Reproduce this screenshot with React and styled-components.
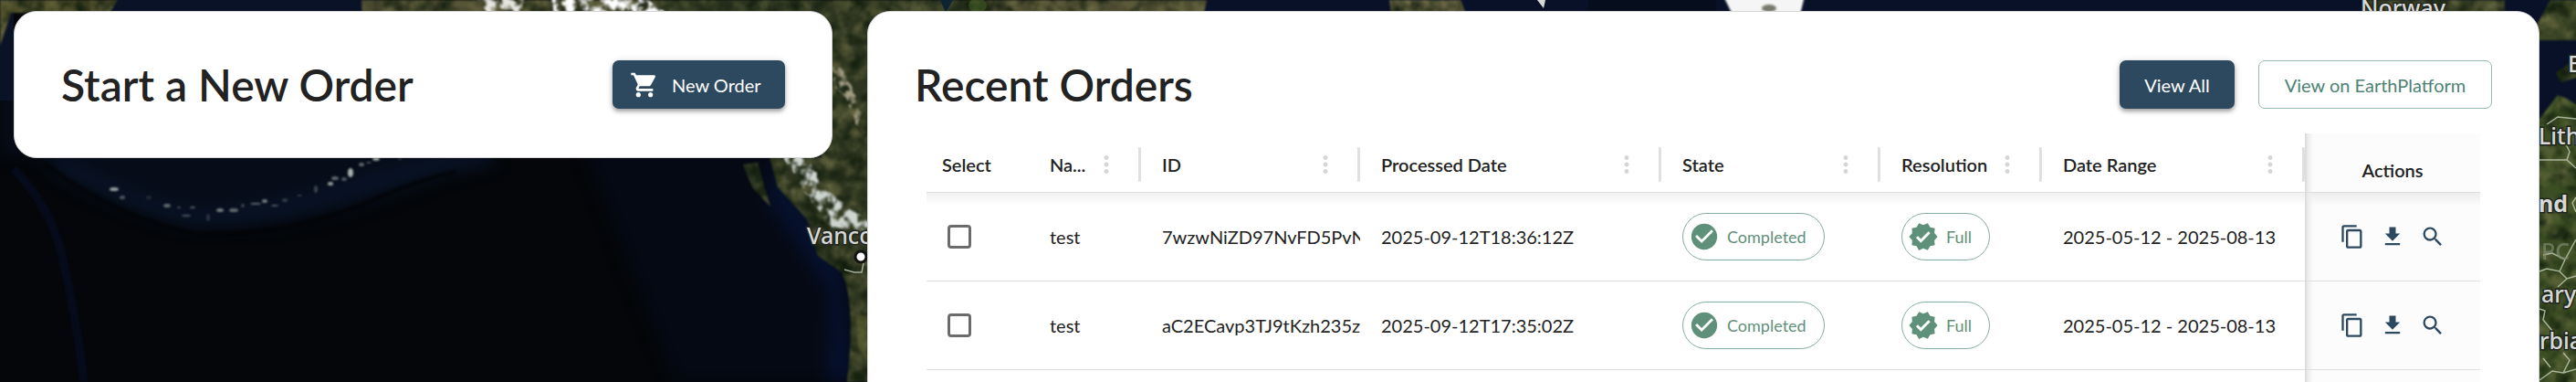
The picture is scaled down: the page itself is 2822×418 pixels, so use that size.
import React, { useState } from 'react';
import styled, { createGlobalStyle } from 'styled-components';
import {
  MdShoppingCart,
  MdMoreVert,
  MdCheckCircle,
  MdVerified,
  MdContentCopy,
  MdFileDownload,
  MdSearch,
} from 'react-icons/md';

const columns = [
  { label: 'Select', width: 112, plain: true },
  { label: 'Na...', width: 123 },
  { label: 'ID', width: 240 },
  { label: 'Processed Date', width: 330 },
  { label: 'State', width: 240 },
  { label: 'Resolution', width: 177 },
  { label: 'Date Range', width: 288 },
];

const orders = [
  {
    name: 'test',
    id: '7wzwNiZD97NvFD5PvN',
    processed: '2025-09-12T18:36:12Z',
    state: 'Completed',
    resolution: 'Full',
    range: '2025-05-12 - 2025-08-13',
  },
  {
    name: 'test',
    id: 'aC2ECavp3TJ9tKzh235z',
    processed: '2025-09-12T17:35:02Z',
    state: 'Completed',
    resolution: 'Full',
    range: '2025-05-12 - 2025-08-13',
  },
];

// small islands along the arc: x, y, rx, ry, opacity
const islands = [
  [125, 207, 5, 2, 0.8], [134, 216, 3, 2, 0.4], [163, 216, 3, 2, 0.15], [183, 225, 4, 2, 0.5],
  [196, 227, 2, 1, 0.4], [211, 227, 3, 1, 0.5], [204, 236, 5, 1, 0.4], [228, 238, 2, 4, 0.2],
  [241, 230, 4, 2, 0.6], [256, 230, 5, 2, 0.5], [266, 225, 2, 2, 0.3], [280, 223, 6, 1, 0.5],
  [290, 220, 3, 2, 0.6], [301, 225, 4, 1, 0.4], [312, 219, 3, 2, 0.25], [328, 214, 3, 1, 0.25],
  [346, 207, 2, 4, 0.3], [362, 201, 3, 2, 0.8], [367, 195, 4, 2, 0.5], [377, 196, 3, 2, 0.4],
  [384, 189, 3, 5, 0.9], [396, 180, 3, 2, 0.5], [404, 178, 3, 1, 0.4], [412, 174, 4, 2, 0.8],
  [438, 174, 2, 1, 0.3],
];

const MapBackground = () => (
  <MapSvg viewBox="0 0 2822 418" preserveAspectRatio="xMinYMin slice" aria-hidden="true">
    <defs>
      <filter id="soft" x="-20%" y="-20%" width="140%" height="140%" colorInterpolationFilters="sRGB">
        <feGaussianBlur stdDeviation="9" />
      </filter>
      <filter id="edge" x="-20%" y="-20%" width="140%" height="140%" colorInterpolationFilters="sRGB">
        <feGaussianBlur stdDeviation="1" />
      </filter>
      <filter id="terrain" x="0" y="0" width="100%" height="100%" colorInterpolationFilters="sRGB">
        <feTurbulence type="fractalNoise" baseFrequency="0.06" numOctaves="4" seed="7" result="noise" />
        <feColorMatrix in="noise" values="0 0 0 0 0.45  0 0 0 0 0.45  0 0 0 0 0.28  1.6 0 0 0 -0.6" result="light" />
        <feColorMatrix in="noise" values="0 0 0 0 0.05  0 0 0 0 0.1  0 0 0 0 0.04  0 2 0 0 -0.8" result="dark" />
        <feComposite in="light" in2="SourceAlpha" operator="in" result="lightCut" />
        <feComposite in="dark" in2="SourceAlpha" operator="in" result="darkCut" />
        <feMerge result="land">
          <feMergeNode in="SourceGraphic" />
          <feMergeNode in="lightCut" />
          <feMergeNode in="darkCut" />
        </feMerge>
        <feGaussianBlur in="land" stdDeviation="1" />
      </filter>
      <filter id="snow" x="-20%" y="-20%" width="140%" height="140%" colorInterpolationFilters="sRGB">
        <feTurbulence type="fractalNoise" baseFrequency="0.1" numOctaves="3" seed="3" result="noise" />
        <feDisplacementMap in="SourceGraphic" in2="noise" scale="18" result="rough" />
        <feColorMatrix in="noise" values="0 0 0 0 1  0 0 0 0 1  0 0 0 0 1  5 0 0 0 -2" result="holes" />
        <feComposite in="rough" in2="holes" operator="in" result="patches" />
        <feGaussianBlur in="patches" stdDeviation="1" />
      </filter>
    </defs>

    <rect width="2822" height="418" fill="#040609" />

    {/* open water */}
    <g filter="url(#soft)">
      <path d="M0 60 L560 60 L500 185 Q400 232 300 246 Q215 256 130 222 L40 170 L0 170Z" fill="#060c18" />
      <path d="M60 178 Q140 224 215 240 Q300 236 380 208 Q440 190 540 170" stroke="#091428" strokeWidth="18" fill="none" />
      <path d="M640 160 L900 160 L950 418 L740 418Z" fill="#050914" />
      <path d="M850 170 L925 290 L936 418 L905 418 L908 320 L840 220Z" fill="#06102c" />
    </g>
    <path d="M15 185 Q55 225 68 280 Q84 350 92 418" stroke="#070d20" strokeWidth="9" fill="none" opacity="0.8" filter="url(#edge)" />
    <path d="M50 180 Q130 240 220 257 Q330 256 420 214 Q460 196 500 188" stroke="#020305" strokeWidth="5" fill="none" opacity="0.6" filter="url(#edge)" />
    <rect x="0" y="0" width="15" height="110" fill="#0a1326" />
    <rect x="120" y="0" width="290" height="30" fill="#091226" />
    <rect x="1300" y="0" width="1522" height="130" fill="#081127" />
    <rect x="1740" y="0" width="140" height="20" fill="#060d1c" />

    {/* land */}
    <g filter="url(#terrain)">
      <path d="M0 0 H129 L120 14 H12 L0 50Z" fill="#4c4b29" />
      <path d="M396 0 H720 V40 H398Z" fill="#4a4930" />
      <path d="M720 0 H1322 L1318 20 H960 V418 H928 Q938 330 922 298 L896 280 L884 240 L852 205 L843 172 H900 V20 H720Z" fill="#2d3520" />
      <path d="M1060 0 H1322 L1318 20 H1060Z" fill="#4b4930" />
      <path d="M1522 0 H1600 L1606 16 H1524Z" fill="#6e6748" />
      <path d="M2590 0 H2744 V20 H2590Z" fill="#363d23" />
      <path d="M2794 0 H2830 V44 H2770Z" fill="#3b4525" />
      <path d="M2770 146 L2802 104 L2812 108 L2830 120 V426 H2770Z" fill="#3b4f23" />
      <path d="M2800 80 L2830 58 V82 L2806 90Z" fill="#283519" />
      <path d="M814 180 L830 178 L844 226 L824 205Z" fill="#1c2818" />
    </g>
    <path d="M1030 0 H1044 L1036 14Z" fill="#0f2433" />
    <ellipse cx="1071" cy="6" rx="10" ry="8" fill="#3f5a22" opacity="0.6" />
    <path d="M938 345 L950 345 L950 395 L940 380Z" fill="#6b6f33" opacity="0.4" filter="url(#edge)" />

    {/* snow and ice */}
    <g filter="url(#snow)">
      <path d="M524 -6 L572 -6 L574 16 L534 16Z" fill="#e6e6df" />
      <path d="M610 -6 L700 -6 L735 18 L604 18Z" fill="#ffffff" />
      <path d="M856 168 L884 168 L900 204 L926 224 L956 246 L940 258 L910 248 L884 214Z" fill="#cfd6d1" />
      <path d="M912 66 L926 80 L938 110 L944 146 L928 108 L912 94Z" fill="#a59f86" />
    </g>
    <path d="M1888 -4 H1977 L1972 16 H1898Z" fill="#f4f5f4" filter="url(#edge)" />
    <ellipse cx="1938" cy="9" rx="8" ry="4" fill="#77796c" filter="url(#edge)" />
    <path d="M1684 0 H1693 L1691 9Z" fill="#d5dad8" />

    <g fill="#b9c3bd" filter="url(#edge)">
      {islands.map(([x, y, rx, ry, opacity]) => (
        <ellipse key={`${x}-${y}`} cx={x} cy={y} rx={rx} ry={ry} opacity={opacity} />
      ))}
    </g>

    {/* country borders */}
    <g fill="none" stroke="#b9c4ad" strokeWidth="1.5" opacity="0.85">
      <path d="M2790 136 L2802 128 L2822 130" />
      <path d="M2782 175 H2812 L2815 166 L2811 158 M2812 175 L2822 184" />
      <path d="M2822 216 L2818 222 L2822 232" />
      <path d="M2782 297 L2790 294 L2804 297 L2810 284 L2822 262 M2804 297 L2812 305 L2822 302 M2812 305 L2802 314" />
      <path d="M2810 284 L2796 277 L2786 279" />
      <path d="M2782 338 L2788 340 L2786 350 L2796 362" />
      <path d="M2808 386 L2815 394 L2808 408 L2796 406 L2782 416 M2786 392 L2794 402 M2808 408 L2822 404" />
      <path d="M925 295 L936 298 L944 298 L946 288" />
    </g>

    <MapLabel x="884" y="267">Vanco</MapLabel>
    <circle cx="943" cy="281" r="6" fill="#ffffff" stroke="#111111" strokeWidth="3" />
    <MapLabel x="2586" y="18">Norway</MapLabel>
    <MapLabel x="2813" y="79">E</MapLabel>
    <MapLabel x="2781" y="158">Lith</MapLabel>
    <BoldLabel x="2781" y="232">nd</BoldLabel>
    <FaintLabel x="2784" y="284">PC</FaintLabel>
    <MapLabel x="2784" y="331">ary</MapLabel>
    <MapLabel x="2782" y="382">rbia</MapLabel>
  </MapSvg>
);

const OrderRow = ({ order, number, first }) => {
  const [checked, setChecked] = useState(false);

  return (
    <tr>
      <Cell $first={first}>
        <Checkbox
          type="checkbox"
          aria-label={`Select order ${number}`}
          checked={checked}
          onChange={(e) => setChecked(e.target.checked)}
        />
      </Cell>
      <Cell $first={first}>{order.name}</Cell>
      <Cell $first={first}>{order.id}</Cell>
      <Cell $first={first}>{order.processed}</Cell>
      <Cell $first={first}>
        <Chip>
          <MdCheckCircle size={34} />
          {order.state}
        </Chip>
      </Cell>
      <Cell $first={first}>
        <Chip>
          <MdVerified size={34} />
          {order.resolution}
        </Chip>
      </Cell>
      <Cell $first={first}>{order.range}</Cell>
      <PinnedCell $first={first}>
        <Actions>
          <IconButton type="button" aria-label="Copy order"><MdContentCopy /></IconButton>
          <IconButton type="button" aria-label="Download order"><MdFileDownload /></IconButton>
          <IconButton type="button" aria-label="Inspect order"><MdSearch /></IconButton>
        </Actions>
      </PinnedCell>
    </tr>
  );
};

const App = () => (
  <Page>
    <GlobalStyle />
    <MapBackground />
    <Card>
      <CardHeader>
        <Title>Start a New Order</Title>
        <PrimaryButton type="button" $withIcon>
          <MdShoppingCart size={32} />
          New Order
        </PrimaryButton>
      </CardHeader>
    </Card>
    <Card $tall>
      <CardHeader>
        <Title>Recent Orders</Title>
        <ButtonGroup>
          <PrimaryButton type="button">View All</PrimaryButton>
          <OutlinedButton type="button">View on EarthPlatform</OutlinedButton>
        </ButtonGroup>
      </CardHeader>
      <TableWrapper>
        <Table>
          <colgroup>
            {columns.map((column) => (
              <col key={column.label} width={column.width} />
            ))}
            <col width="192" />
          </colgroup>
          <thead>
            <tr>
              {columns.map((column) => (
                <HeadCell key={column.label} $plain={column.plain}>
                  <HeadContent $plain={column.plain}>
                    {column.label}
                    {!column.plain && (
                      <MenuButton type="button" aria-label={`${column.label} column menu`}>
                        <MdMoreVert size={30} />
                      </MenuButton>
                    )}
                  </HeadContent>
                </HeadCell>
              ))}
              <PinnedHead>Actions</PinnedHead>
            </tr>
          </thead>
          <tbody>
            {orders.map((order, i) => (
              <OrderRow key={order.id} order={order} number={i + 1} first={i === 0} />
            ))}
          </tbody>
          <tfoot>
            <tr>
              <FootCell colSpan={7} />
              <PinnedFoot />
            </tr>
          </tfoot>
        </Table>
      </TableWrapper>
    </Card>
  </Page>
);

export default App;

const GlobalStyle = createGlobalStyle`
  * {
    box-sizing: border-box;
  }
  body {
    margin: 0;
    color: #222222;
    font-family: Lato, "Open Sans", sans-serif;
    font-size: 20px;
  }
  button {
    font-family: inherit;
    cursor: pointer;
  }
`;

const Page = styled.main`
  position: relative;
  display: grid;
  grid-template-columns: 897fr 1832fr;
  align-items: start;
  gap: 38px;
  height: 100vh;
  padding: 12px 40px 0 15px;
  overflow: hidden;
`;

const MapSvg = styled.svg`
  position: absolute;
  inset: 0;
  width: 100%;
  height: 100%;
`;

const MapLabel = styled.text`
  font-family: "Noto Sans", sans-serif;
  font-size: 25px;
  font-weight: 500;
  fill: #d6d8d6;
  stroke: #22261f;
  stroke-width: 3px;
  paint-order: stroke;
`;

const BoldLabel = styled(MapLabel)`
  font-weight: 700;
`;

const FaintLabel = styled(MapLabel)`
  fill: #7d8a72;
  stroke: none;
  opacity: 0.7;
`;

const Card = styled.section`
  position: relative;
  min-width: 0;
  min-height: ${(props) => (props.$tall ? '480px' : 'auto')};
  padding: 53px 51px;
  background-color: #ffffff;
  border: 1px solid #d5d5d5;
  border-radius: 25px;
`;

const CardHeader = styled.div`
  display: flex;
  align-items: center;
  justify-content: space-between;
  height: 53px;
`;

const Title = styled.h2`
  margin: 0;
  font-size: 48px;
  font-weight: 600;
  line-height: 53px;
  white-space: nowrap;
`;

const ButtonGroup = styled.div`
  display: flex;
  gap: 26px;
`;

const BaseButton = styled.button`
  display: flex;
  align-items: center;
  justify-content: center;
  gap: 14px;
  height: 53px;
  padding: 0 25px;
  border-radius: 7px;
  font-size: 20px;
  line-height: 24px;
  white-space: nowrap;
`;

const PrimaryButton = styled(BaseButton)`
  justify-content: ${(props) => (props.$withIcon ? 'flex-start' : 'center')};
  min-width: ${(props) => (props.$withIcon ? '189px' : '126px')};
  padding-left: ${(props) => (props.$withIcon ? '19px' : '25px')};
  border: none;
  background-color: #2d4960;
  color: #ffffff;
  box-shadow: 0 3px 4px rgba(0, 0, 0, 0.3), 0 1px 8px rgba(0, 0, 0, 0.14);
`;

const OutlinedButton = styled(BaseButton)`
  min-width: 256px;
  border: 1px solid #95b9ae;
  background-color: #ffffff;
  color: #4c8273;
`;

const TableWrapper = styled.div`
  margin: 27px 13px 0;
`;

const Table = styled.table`
  width: 100%;
  table-layout: fixed;
  border-collapse: separate;
  border-spacing: 0;
`;

const HeadCell = styled.th`
  height: 65px;
  padding: 4px 0 0 ${(props) => (props.$plain ? '17px' : '23px')};
  border-bottom: 1px solid #dedede;
  font-weight: 600;
  text-align: left;
  white-space: nowrap;
`;

const HeadContent = styled.div`
  display: flex;
  align-items: center;
  justify-content: space-between;
  height: 38px;
  padding-right: 20px;
  border-right: ${(props) => (props.$plain ? 'none' : '3px solid #e0e0e0')};
  border-radius: 2px;
`;

const MenuButton = styled.button`
  display: flex;
  width: 30px;
  padding: 0;
  border: none;
  background: none;
  color: #d6d6d6;
`;

const Cell = styled.td`
  height: 97px;
  padding: 0 0 0 23px;
  border-bottom: 1px solid #dedede;
  background-image: ${(props) =>
    props.$first ? 'linear-gradient(rgba(0, 0, 0, 0.06), rgba(0, 0, 0, 0) 14px)' : 'none'};
  overflow: hidden;
  white-space: nowrap;
`;

const pinnedShade = 'linear-gradient(90deg, #dcdcdc 1px, #ececec 3px, rgba(252, 252, 252, 0) 9px)';

const PinnedCell = styled(Cell)`
  padding: 0;
  background-color: #fcfcfc;
  background-image: ${(props) =>
    props.$first
      ? `${pinnedShade}, linear-gradient(rgba(0, 0, 0, 0.06), rgba(0, 0, 0, 0) 14px)`
      : pinnedShade};
`;

const PinnedHead = styled(HeadCell)`
  padding: 16px 0 0;
  background-color: #fcfcfc;
  background-image: ${pinnedShade};
  text-align: center;
`;

const FootCell = styled.td`
  height: 60px;
`;

const PinnedFoot = styled(FootCell)`
  background-color: #fcfcfc;
  background-image: ${pinnedShade};
`;

const Checkbox = styled.input`
  appearance: none;
  display: block;
  width: 26px;
  height: 26px;
  margin: 0;
  border: 3px solid #6b6b6b;
  border-radius: 4px;
  background-color: #ffffff;

  &:checked {
    background-color: #2d4960;
  }
`;

const Chip = styled.span`
  display: inline-flex;
  align-items: center;
  gap: 8px;
  height: 52px;
  padding: 0 19px 0 6px;
  border: 1px solid #86ae9d;
  border-radius: 26px;
  color: #5f9079;
  font-size: 18px;
  vertical-align: middle;
`;

const Actions = styled.div`
  display: flex;
  justify-content: center;
  gap: 16px;
`;

const IconButton = styled.button`
  display: flex;
  padding: 0;
  border: none;
  background: none;
  color: #2d4960;
  font-size: 28px;
`;
